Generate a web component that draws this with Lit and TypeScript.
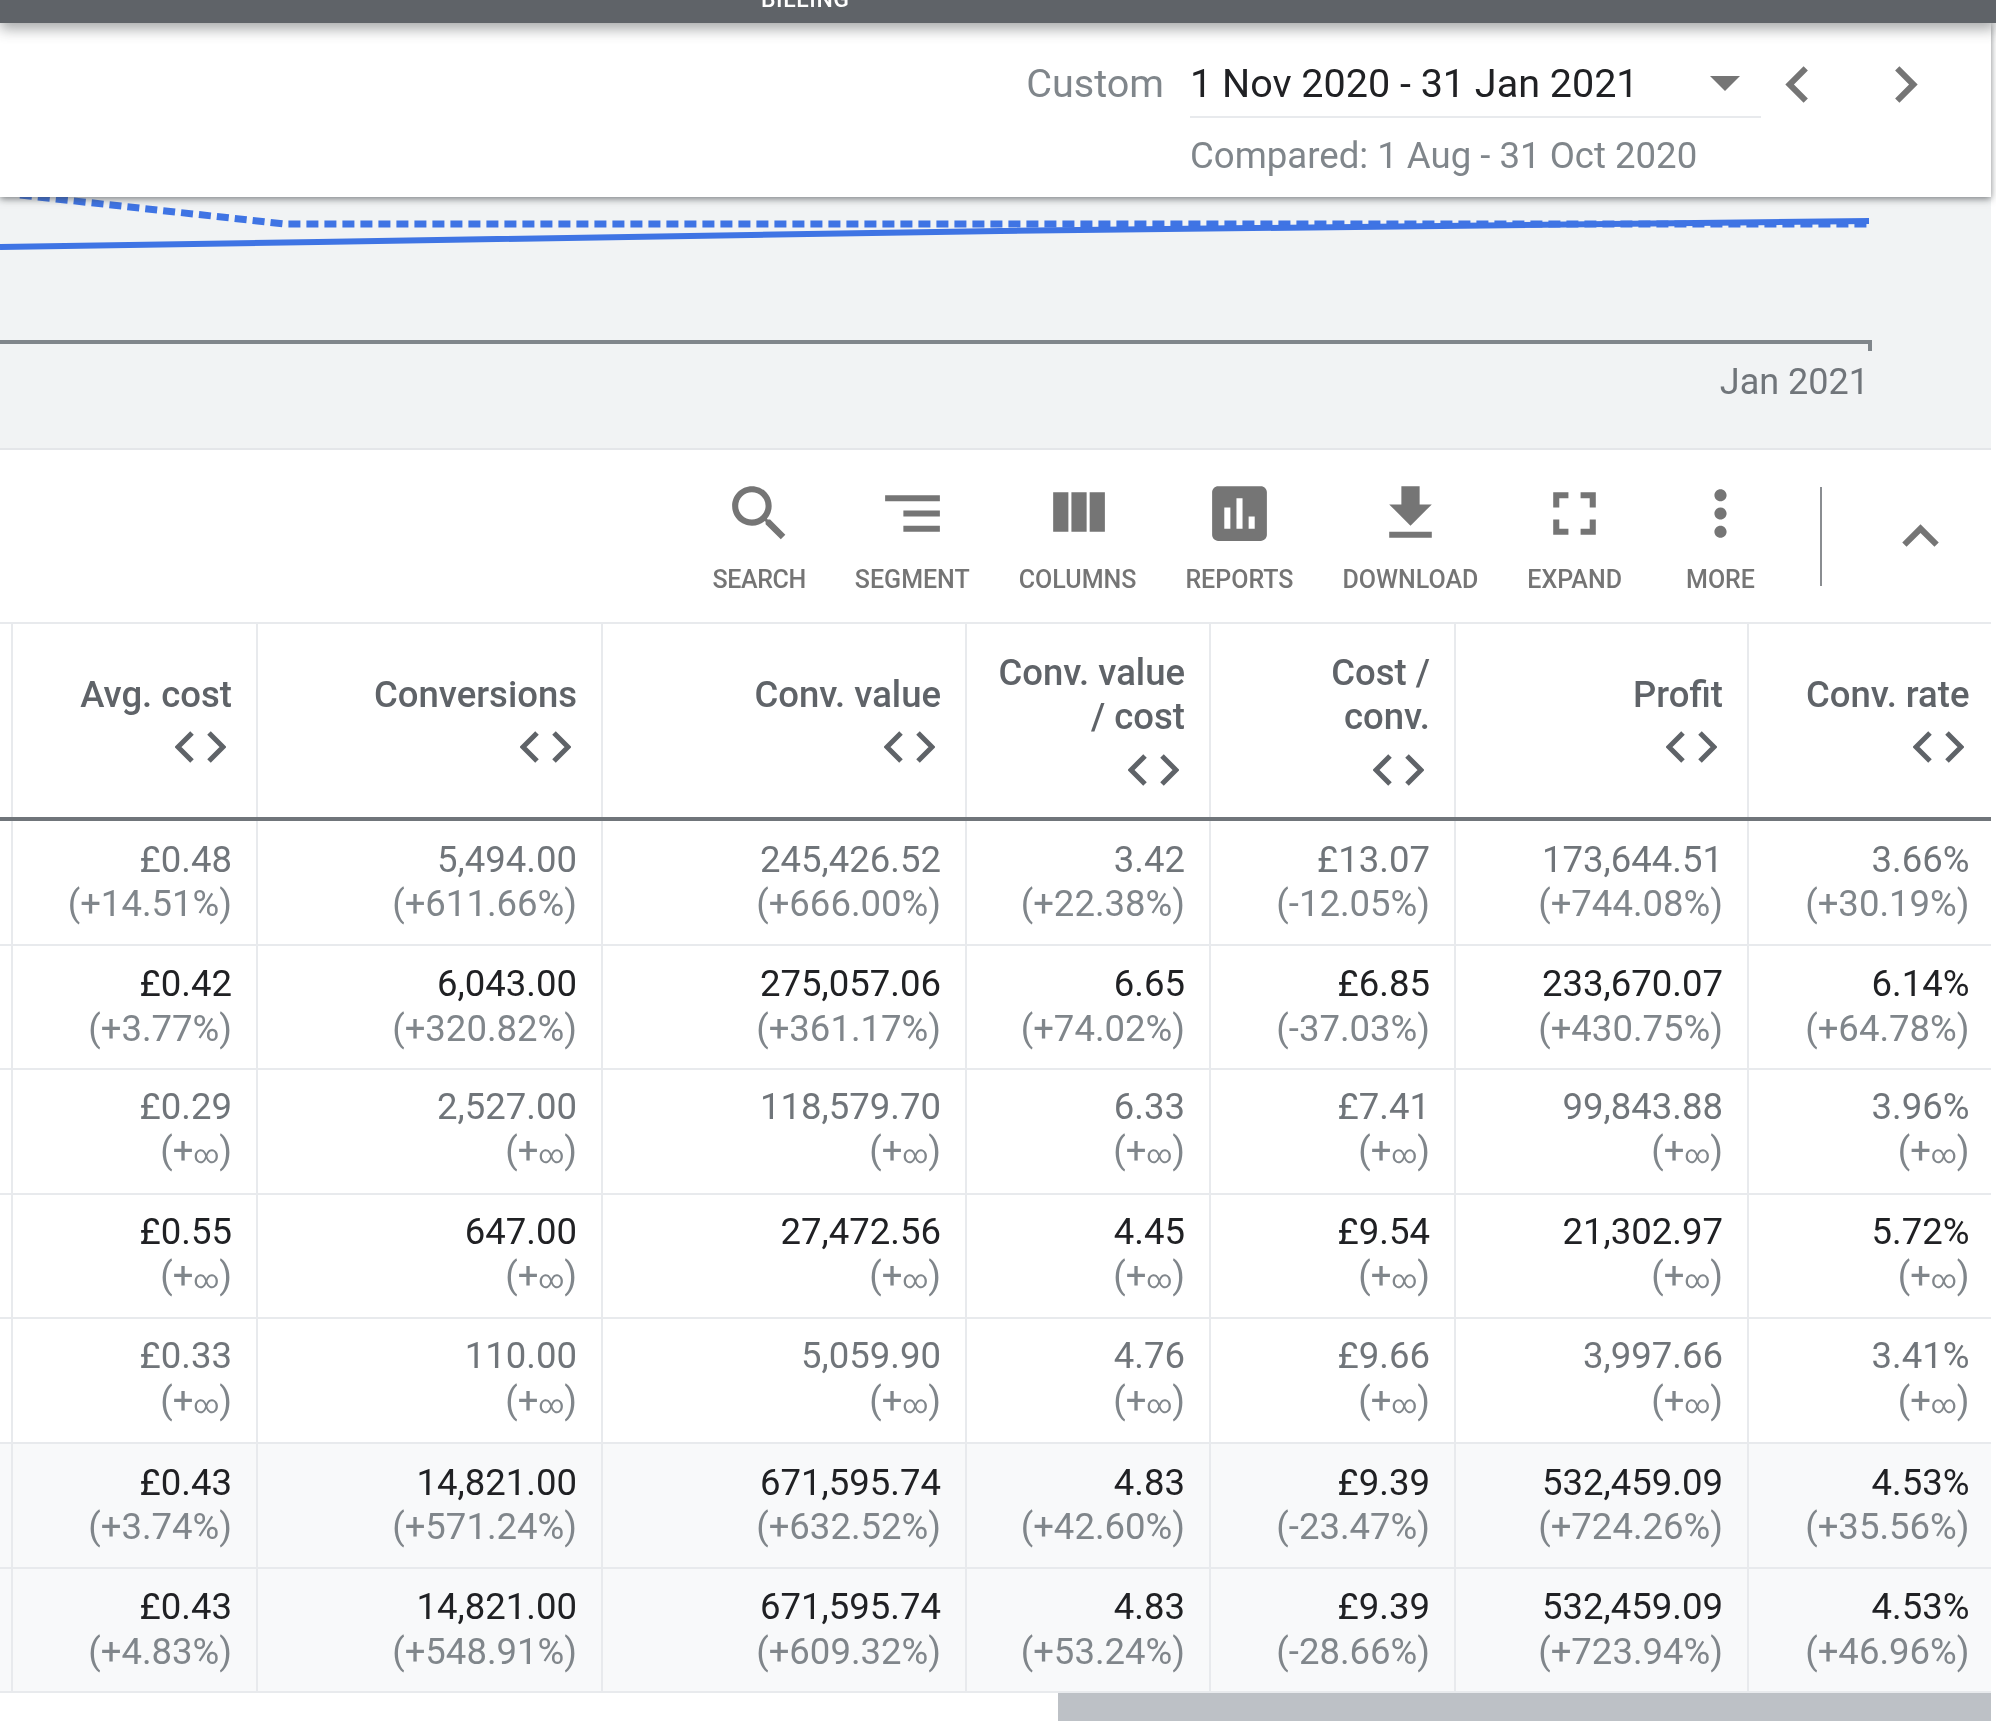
import { LitElement, html, css, svg } from "lit";
import { customElement } from "lit/decorators.js";

const I: Record<string, string> = {
  search: "M15.5 14h-.79l-.28-.27C15.41 12.59 16 11.11 16 9.5 16 5.91 13.09 3 9.5 3S3 5.91 3 9.5 5.91 16 9.5 16c1.61 0 3.09-.59 4.23-1.57l.27.28v.79l5 4.99L20.49 19l-4.99-5zm-6 0C7.01 14 5 11.99 5 9.5S7.01 5 9.5 5 14 7.01 14 9.5 11.99 14 9.5 14z",
  segment: "M9 18h12v-2H9v2zM3 6v2h18V6H3zm6 7h12v-2H9v2z",
  columns: "M10 18h5V5h-5v13zm-6 0h5V5H4v13zM16 5v13h5V5h-5z",
  reports: "M19 3H5c-1.1 0-2 .9-2 2v14c0 1.1.9 2 2 2h14c1.1 0 2-.9 2-2V5c0-1.1-.9-2-2-2zM9 17H7v-7h2v7zm4 0h-2V7h2v10zm4 0h-2v-4h2v4z",
  download: "M19 9h-4V3H9v6H5l7 7 7-7zM5 18v2h14v-2H5z",
  expand: "M7 14H5v5h5v-2H7v-3zm-2-4h2V7h3V5H5v5zm12 7h-3v2h5v-5h-2v3zM14 5v2h3v3h2V5h-5z",
  more: "M12 8c1.1 0 2-.9 2-2s-.9-2-2-2-2 .9-2 2 .9 2 2 2zm0 2c-1.1 0-2 .9-2 2s.9 2 2 2 2-.9 2-2-.9-2-2-2zm0 6c-1.1 0-2 .9-2 2s.9 2 2 2 2-.9 2-2-.9-2-2-2z",
  up: "M12 8l-6 6 1.41 1.41L12 10.83l4.59 4.58L18 14z",
  left: "M15.41 7.41L14 6l-6 6 6 6 1.41-1.41L10.83 12z",
  right: "M10 6L8.59 7.41 13.17 12l-4.58 4.59L10 18l6-6z",
};
const icon = (k: string) => html`<svg class="icon" viewBox="0 0 24 24"><path d=${I[k]}></path></svg>`;

const tools: [string, string][] = [
  ["search", "SEARCH"], ["segment", "SEGMENT"], ["columns", "COLUMNS"], ["reports", "REPORTS"],
  ["download", "DOWNLOAD"], ["expand", "EXPAND"], ["more", "MORE"],
];
const heads: string[][] = [
  ["Avg. cost"], ["Conversions"], ["Conv. value"], ["Conv. value", "/ cost"], ["Cost /", "conv."], ["Profit"], ["Conv. rate"],
];
const INF = "inf";
const rows: { muted: boolean; total: boolean; cells: [string, string][] }[] = [
  { muted: true, total: false, cells: [["£0.48", "(+14.51%)"], ["5,494.00", "(+611.66%)"], ["245,426.52", "(+666.00%)"], ["3.42", "(+22.38%)"], ["£13.07", "(-12.05%)"], ["173,644.51", "(+744.08%)"], ["3.66%", "(+30.19%)"]] },
  { muted: false, total: false, cells: [["£0.42", "(+3.77%)"], ["6,043.00", "(+320.82%)"], ["275,057.06", "(+361.17%)"], ["6.65", "(+74.02%)"], ["£6.85", "(-37.03%)"], ["233,670.07", "(+430.75%)"], ["6.14%", "(+64.78%)"]] },
  { muted: true, total: false, cells: [["£0.29", INF], ["2,527.00", INF], ["118,579.70", INF], ["6.33", INF], ["£7.41", INF], ["99,843.88", INF], ["3.96%", INF]] },
  { muted: false, total: false, cells: [["£0.55", INF], ["647.00", INF], ["27,472.56", INF], ["4.45", INF], ["£9.54", INF], ["21,302.97", INF], ["5.72%", INF]] },
  { muted: true, total: false, cells: [["£0.33", INF], ["110.00", INF], ["5,059.90", INF], ["4.76", INF], ["£9.66", INF], ["3,997.66", INF], ["3.41%", INF]] },
  { muted: false, total: true, cells: [["£0.43", "(+3.74%)"], ["14,821.00", "(+571.24%)"], ["671,595.74", "(+632.52%)"], ["4.83", "(+42.60%)"], ["£9.39", "(-23.47%)"], ["532,459.09", "(+724.26%)"], ["4.53%", "(+35.56%)"]] },
  { muted: false, total: true, cells: [["£0.43", "(+4.83%)"], ["14,821.00", "(+548.91%)"], ["671,595.74", "(+609.32%)"], ["4.83", "(+53.24%)"], ["£9.39", "(-28.66%)"], ["532,459.09", "(+723.94%)"], ["4.53%", "(+46.96%)"]] },
];

@customElement("app-root")
export class AppRoot extends LitElement {
  static styles = css`
    :host { display: block; width: 1996px; height: 1726px; overflow: hidden; background: #fff;
      font-family: Roboto, "Liberation Sans", sans-serif; position: relative; filter: blur(.55px); }
    .topbar { height: 23px; background: #5f6368; overflow: hidden; display: flex; align-items: flex-end;
      padding-left: 761px; padding-bottom: 15px; box-sizing: border-box; box-shadow: 0 6px 14px rgba(60,64,67,.45);
      position: relative; z-index: 3; }
    .topbar span { color: #fff; font-size: 23px; font-weight: 500; line-height: 16px; letter-spacing: .6px; }
    .main { width: 1991px; }
    .datebar { height: 174px; background: #fff; display: flex; justify-content: flex-end; box-sizing: border-box;
      padding-top: 22px; padding-right: 49px; position: relative; z-index: 2; box-shadow: 0 2px 7px rgba(60,64,67,.65); width: 1991px;}
    .custom { font-size: 39.6px; color: #80868b; line-height: 78px; margin-right: 26px; }
    .range { width: 571px; }
    .select { border-bottom: 2px solid #e8eaed; display: flex; justify-content: space-between; align-items: center; padding-top: 6px; box-sizing: border-box; height: 73px; }
    .select span { font-size: 39.5px; color: #202124; }
    .tri { width: 0; height: 0; border-left: 15px solid transparent; border-right: 15px solid transparent; border-top: 15px solid #757575; margin-right: 21px; }
    .compared { font-size: 36.6px; color: #80868b; line-height: 76px; }
    .navs { display: flex; gap: 35px; padding-top: 3px; }
    .navs .icon { width: 73px; height: 73px; fill: #757575; display: block; }
    .chart { height: 253px; background: #f1f3f4; border-bottom: 2px solid #e4e6e9; box-sizing: border-box; }
    .chart svg { display: block; width: 1991px; height: 155px; }
    .jan { text-align: right; padding-right: 122px; font-size: 36px; color: #70757a; line-height: 44px; margin-top: 8px; }
    .toolbar { height: 174px; display: flex; justify-content: flex-end; align-items: flex-start; padding-right: 34px; box-sizing: border-box; border-bottom: 2px solid #e8eaed; }
    .tools { display: flex; gap: 49px; padding-top: 27px; }
    .tool { display: flex; flex-direction: column; align-items: center; }
    .tool:first-child span { letter-spacing: -.4px; }
    .tool .icon { width: 73px; height: 73px; fill: #757575; display: block; }
    .tool span { font-size: 25px; font-weight: 500; color: #757575; line-height: 30px; margin-top: 15px; white-space: nowrap; }
    .tool.m { padding: 0 15px 0 13px; }
    .divider { width: 2px; height: 99px; background: #8a8d91; margin: 37px 0 0 48px; }
    .up { margin: 50px 0 0 62px; }
    .up .icon { width: 73px; height: 73px; fill: #757575; display: block; }
    .row { display: grid; grid-template-columns: 13px 244.5px 345px 364px 244px 245px 293px 243px; box-sizing: border-box; height: 124.6px; border-bottom: 2px solid #e8eaed; }
    .row.head { height: 197px; border-bottom: 4px solid #70757a; }
    .row.head .cell { padding-bottom: 5px; }
    .row.total { background: #f8f9fa; }
    .cell { border-right: 2px solid #e8eaed; display: flex; flex-direction: column; justify-content: center; align-items: flex-end; padding-right: 23.5px; box-sizing: border-box; min-width: 0; }
    .cell:last-child { border-right: 0; padding-right: 22px; }
    .cell.stub { padding: 0; }
    .row .a, .row .b { font-size: 36.5px; line-height: 44.5px; white-space: nowrap; }
    .row .a { color: #202124; }
    .row.muted .a { color: #70757a; }
    .row .b { color: #80868b; }
    .inf { font-size: 25px; }
    .hl { font-size: 36.5px; font-weight: 500; line-height: 44.5px; color: #5f6368; white-space: nowrap; }
    .sort { display: block; width: 51px; height: 32px; margin: 14px 6px 0 0; }
    .sort path { fill: none; stroke: #5f6368; stroke-width: 5; }
    .scroll { height: 30px; display: flex; justify-content: flex-end; }
    .thumb { width: 933px; height: 28px; background: #bdc1c6; }
  `;

  render() {
    return html`
      <div class="topbar"><span>BILLING</span></div>
      <div class="main">
        <div class="datebar">
          <div class="custom">Custom</div>
          <div class="range">
            <div class="select"><span>1 Nov 2020 - 31 Jan 2021</span><i class="tri"></i></div>
            <div class="compared">Compared: 1 Aug - 31 Oct 2020</div>
          </div>
          <div class="navs">${icon("left")}${icon("right")}</div>
        </div>
        <div class="chart">
          <svg viewBox="0 0 1991 155">
            ${svg`
              <path d="M20 -2 L285 27 L1869 27" fill="none" stroke="#3f74e4" stroke-width="7" stroke-dasharray="12 6"></path>
              <path d="M0 50 C120 48 220 47 318 45 L1000 34 L1869 24" fill="none" stroke="#3f74e4" stroke-width="6"></path>
              <path d="M0 145 L1870 145 V154" fill="none" stroke="#80868b" stroke-width="4"></path>
            `}
          </svg>
          <div class="jan">Jan 2021</div>
        </div>
        <div class="toolbar">
          <div class="tools">
            ${tools.map(([k, l]) => html`<div class="tool ${k === "more" ? "m" : ""}">${icon(k)}<span>${l}</span></div>`)}
          </div>
          <div class="divider"></div>
          <div class="up">${icon("up")}</div>
        </div>
        <div class="row head">
          <div class="cell stub"></div>
          ${heads.map((h) => html`<div class="cell">
            ${h.map((t) => html`<div class="hl">${t}</div>`)}
            <svg class="sort" viewBox="0 0 51 32"><path d="M17 2 L3 16 L17 30"></path><path d="M34 2 L48 16 L34 30"></path></svg>
          </div>`)}
        </div>
        ${rows.map((r) => html`<div class="row ${r.muted ? "muted" : ""} ${r.total ? "total" : ""}">
          <div class="cell stub"></div>
          ${r.cells.map(([a, b]) => html`<div class="cell"><div class="a">${a}</div><div class="b">${b === INF ? html`(+<span class="inf">∞</span>)` : b}</div></div>`)}
        </div>`)}
        <div class="scroll"><div class="thumb"></div></div>
      </div>
    `;
  }
}
